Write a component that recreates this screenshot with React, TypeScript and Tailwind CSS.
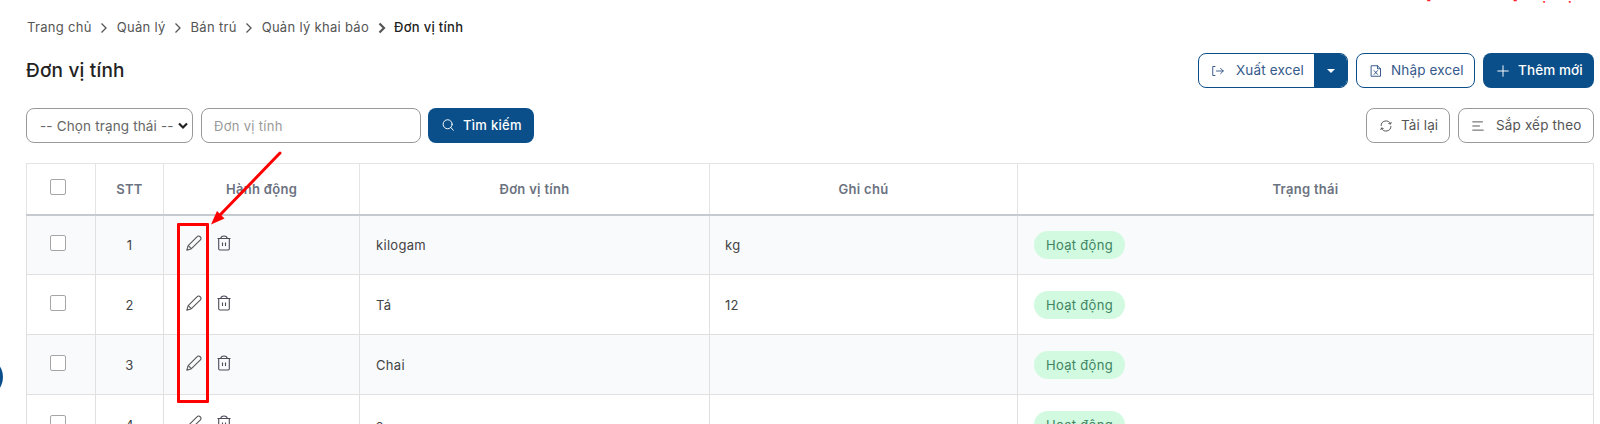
import React from 'react';

interface Unit {
  id: number;
  name: string;
  note: string;
  status: string;
}

const units: Unit[] = [
  { id: 1, name: 'kilogam', note: 'kg', status: 'Hoạt động' },
  { id: 2, name: 'Tá', note: '12', status: 'Hoạt động' },
  { id: 3, name: 'Chai', note: '', status: 'Hoạt động' },
  { id: 4, name: 'a', note: '', status: 'Hoạt động' },
];

const columns = ['STT', 'Hành động', 'Đơn vị tính', 'Ghi chú', 'Trạng thái'];

const breadcrumbs = ['Trang chủ', 'Quản lý', 'Bán trú', 'Quản lý khai báo'];

const Icon: React.FC<{ className?: string; children: React.ReactNode }> = ({ className, children }) => (
  <svg
    viewBox="0 0 16 16"
    className={className}
    fill="none"
    stroke="currentColor"
    strokeWidth="1.3"
    strokeLinecap="round"
    strokeLinejoin="round"
  >
    {children}
  </svg>
);

const Chevron: React.FC<{ bold?: boolean }> = ({ bold }) => (
  <svg viewBox="0 0 8 12" className="w-2 h-3 mx-[8.5px]" fill="none" stroke="currentColor" strokeWidth={bold ? 2.2 : 1.3}>
    <path d="M1.500 1.500l4.500 4.500-4.500 4.500" />
  </svg>
);

const Checkbox: React.FC = () => (
  <span className="block w-4 h-4 ml-[23px] -mt-1 bg-white border border-[#a6a6a6] rounded-[2px]" />
);

const PencilIcon: React.FC = () => (
  <svg viewBox="0 0 16 16" className="w-4 h-4" fill="none" stroke="#555" strokeWidth="1.1" strokeLinejoin="round">
    <path d="M.8 15.200l1.400-4.600L11.200 1.600a1.900 1.900 0 0 1 2.700-.1l.6.6a1.900 1.900 0 0 1-.1 2.700L5.400 13.700z" />
    <path d="M2.200 10.600l3.200 3.100" />
  </svg>
);

const TrashIcon: React.FC = () => (
  <svg viewBox="0 0 14 16" className="w-3.5 h-4" fill="none" stroke="#4b4b58" strokeWidth="1.1" strokeLinejoin="round">
    <path d="M.5 3.500h13M3.800 3.300C4 1.500 4.800 1 7 1s3 .5 3.200 2.300M1.700 3.500v10.300q0 1.200 1.200 1.200h8.200q1.200 0 1.200-1.200V3.500" />
    <path d="M5.500 7.500v3.500M8.500 7.500v3.500" />
  </svg>
);

const App: React.FC = () => {
  return (
    <div className="relative w-[1600px] h-[424px] overflow-hidden bg-white font-['Inter',sans-serif] text-[13px] tracking-[0.3px] text-[#444]">
      <div className="absolute -top-[14px] left-[1426px] text-[13.5px] leading-[18px] tracking-normal font-semibold text-[#ff1a2a] whitespace-nowrap">
        [PHÒNG BAN] - Bộ nhị VP
      </div>

      <div className="flex items-center h-5 mt-[18px] pl-[27px] text-[#555]">
        {breadcrumbs.map((item, i) => (
          <React.Fragment key={item}>
            {i > 0 && <Chevron />}
            <span>{item}</span>
          </React.Fragment>
        ))}
        <Chevron bold />
        <span className="font-medium text-[#222]">Đơn vị tính</span>
      </div>

      <div className="flex items-center justify-between mt-[15px] pl-[26px] pr-[6px] h-[35px]">
        <h1 className="pt-0.5 text-[19px] tracking-[0.2px] font-medium text-[#222]">Đơn vị tính</h1>
        <div className="flex gap-2 text-[#35598b]">
          <div className="flex w-[150px] h-[35px] border border-[#0b4f8a] rounded-lg overflow-hidden">
            <div className="flex items-center flex-1 pl-[13px]">
              <Icon className="w-3 h-3 mr-3">
                <path d="M4 2H1v12h3M6 8h9M11.500 4.500l3.500 3.500-3.500 3.500" />
              </Icon>
              <span className="text-[13.5px] tracking-[0.15px]">Xuất excel</span>
            </div>
            <div className="flex items-center justify-center w-[33px] bg-[#0b4f8a]">
              <span className="border-x-4 border-t-4 border-x-transparent border-t-white" />
            </div>
          </div>
          <button className="flex items-center w-[119px] h-[35px] pl-[13px] border border-[#0b4f8a] rounded-lg text-[13.5px] tracking-[0.15px]">
            <Icon className="w-3 h-3 mr-[9px]">
              <path d="M2 1h8l4 4v10H2zM10 1v4h4M5.500 7.500l4.500 5M10 7.500l-4.500 5" />
            </Icon>
            Nhập excel
          </button>
          <button className="flex items-center w-[111px] h-[35px] pl-[14px] bg-[#0b4f8a] rounded-lg text-[13.5px] tracking-[0.1px] font-medium text-white">
            <Icon className="w-3 h-3 mr-[9px]">
              <path d="M8 1v14M1 8h14" />
            </Icon>
            Thêm mới
          </button>
        </div>
      </div>

      <div className="flex items-center mt-5 pl-[26px] pr-[6px] h-[35px]">
        <div className="flex items-center w-[167px] h-[35px] pl-[13px] border border-[#999] rounded-lg pt-px text-[13.5px] tracking-[0.15px] text-[#666] whitespace-nowrap">
          -- Chọn trạng thái --
          <svg viewBox="0 0 10 8" className="w-[10px] h-2 ml-1" fill="none" stroke="#222" strokeWidth="2.200">
            <path d="M1 1.500l4 4 4-4" />
          </svg>
        </div>
        <div className="flex items-center w-[220px] h-[35px] ml-2 pl-3 pt-0.5 border border-[#999] rounded-lg text-[#999]">
          Đơn vị tính
        </div>
        <button className="flex items-center w-[106px] h-[35px] ml-[7px] pl-[14px] bg-[#0b4f8a] rounded-lg font-medium text-white">
          <Icon className="w-3 h-3 mr-[9px] -mt-0.5">
            <circle cx="7.500" cy="7" r="6" />
            <path d="M12 11.500l3 3.500" />
          </Icon>
          Tìm kiếm
        </button>
        <button className="flex items-center w-[84px] h-[35px] ml-auto pl-[13px] border border-[#999] rounded-lg text-[13.5px] tracking-[0.1px] text-[#555]">
          <Icon className="w-3 h-3 mr-[9px]">
            <path d="M1.500 7.500a6.500 6 0 0 1 12.500-2.500M14.500 8.500A6.500 6 0 0 1 2 11M14.800 3.200L14 5.500l-2.300-.8M1.200 12.800L2 10.500l2.300.8" />
          </Icon>
          Tải lại
        </button>
        <button className="flex items-center w-[136px] h-[35px] ml-2 pl-[13px] border border-[#999] rounded-lg text-[13.5px] tracking-[0.15px] text-[#555]">
          <Icon className="w-3 h-3 mr-3">
            <path d="M1 2.500h13M1 8h9M1 13.500h14" />
          </Icon>
          Sắp xếp theo
        </button>
      </div>

      <table className="w-[1568px] mt-5 ml-[26px] table-fixed border-collapse">
        <colgroup>
          <col className="w-[69px]" />
          <col className="w-[68px]" />
          <col className="w-[196px]" />
          <col className="w-[350px]" />
          <col className="w-[308px]" />
          <col />
        </colgroup>
        <thead>
          <tr className="h-[51px] text-[#6b7280]">
            <th className="border border-[#e4e4e4] border-b-2 border-b-[#c6c9cd]"><Checkbox /></th>
            {columns.map((column) => (
              <th key={column} className="pt-0.5 border border-[#e4e4e4] border-b-2 border-b-[#c6c9cd] font-semibold">
                {column}
              </th>
            ))}
          </tr>
        </thead>
        <tbody>
          {units.map((unit) => (
            <tr key={unit.id} className="h-[60px] odd:bg-[#f8fafc]">
              <td className="border border-[#e0e0e0]"><Checkbox /></td>
              <td className="pt-0.5 border border-[#e0e0e0] text-center">{unit.id}</td>
              <td className="border border-[#e0e0e0]">
                <div className="flex items-center pl-[22px] gap-[15px] -mt-[3px]">
                  <PencilIcon />
                  <TrashIcon />
                </div>
              </td>
              <td className="pl-4 pt-0.5 border border-[#e0e0e0]">{unit.name}</td>
              <td className="pl-[15px] pt-0.5 border border-[#e0e0e0]">{unit.note}</td>
              <td className="pl-4 border border-[#e0e0e0]">
                <span className="inline-flex items-center justify-center w-[91px] h-7 pt-0.5 bg-[#d1fae0] rounded-full text-[#3f8563]">
                  {unit.status}
                </span>
              </td>
            </tr>
          ))}
        </tbody>
      </table>

      {/* floating button peeking in from the left */}
      <div className="absolute top-[357px] -left-[37px] w-10 h-10 rounded-full bg-[#0b4f8a]" />

      {/* edit column highlight */}
      <div className="absolute top-[223px] left-[177px] w-8 h-[180px] border-[3px] border-[#ff0000] rounded-[1px]" />
      <svg className="absolute top-[150px] left-[205px] w-20 h-[80px]" viewBox="0 0 80 80">
        <path d="M75 3L15 65" stroke="#ff0000" strokeWidth="3" strokeLinecap="round" />
        <path d="M6 74.500l6-13.500 7.500 7.500z" fill="#ff0000" />
      </svg>
    </div>
  );
};

export default App;
